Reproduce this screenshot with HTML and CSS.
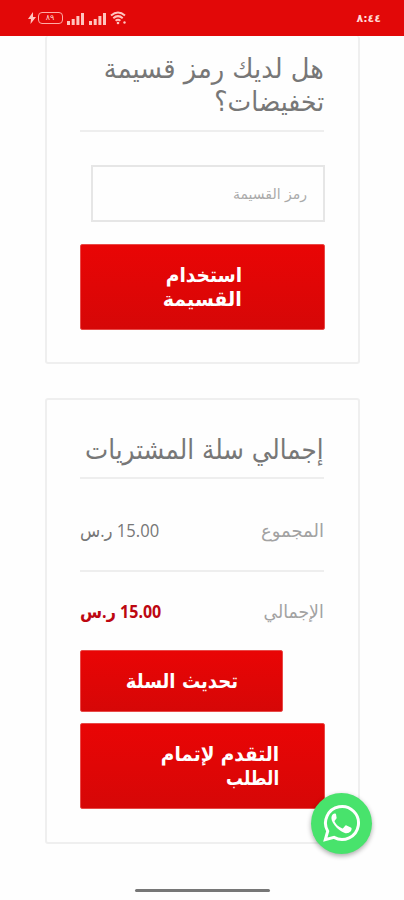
FILE: index.html
```html
<!DOCTYPE html>
<html lang="ar" dir="rtl">
<head>
<meta charset="utf-8">
<title>سلة المشتريات</title>
<link rel="stylesheet" href="styles.css">
</head>
<body>
<header class="status">
  <span class="clock">٨:٤٤</span>
  <div class="indicators">
    <svg class="bolt" width="8" height="12" viewBox="0 0 8 12"><path d="M5 0 0 7h3L2.500 12 8 5H5z"/></svg>
    <span class="battery">٨٩</span>
    <svg class="signal" width="17" height="13" viewBox="0 0 17 13"><path d="M0 9h3v4H0zM4.700 7h3v6h-3zM9.400 4h3v9h-3zM14 1h3v12h-3z"/></svg>
    <svg class="signal" width="17" height="13" viewBox="0 0 17 13"><path d="M0 9h3v4H0zM4.700 7h3v6h-3zM9.400 4h3v9h-3zM14 1h3v12h-3z"/></svg>
    <svg class="wifi" width="17" height="14" viewBox="0 0 17 14"><path d="M1 4.500Q8 -1.500 15 4.500M3.300 7.200Q8 3 12.700 7.200M5.600 9.800Q8 7.800 10.400 9.800"/><circle cx="8" cy="12" r="1.300"/><circle cx="14.500" cy="11.500" r="1.200"/></svg>
  </div>
</header>
<main class="page">
  <section class="card coupon">
    <h2 class="title"><span class="line t1">هل لديك رمز قسيمة</span><span class="line t2">تخفيضات؟</span></h2>
    <div class="field"><span class="line ph">رمز القسيمة</span></div>
    <div class="button apply"><span class="line a1">استخدام</span><span class="line a2">القسيمة</span></div>
  </section>
  <section class="card totals">
    <h2 class="title"><span class="line t3">إجمالي سلة المشتريات</span></h2>
    <div class="row subtotal"><span class="line label l1">المجموع</span><span class="line price p1">15.00 ر.س</span></div>
    <div class="row total"><span class="line label l2">الإجمالي</span><span class="line price p2">15.00 ر.س</span></div>
    <div class="button update"><span class="line u1">تحديث السلة</span></div>
    <div class="button checkout"><span class="line c1">التقدم لإتمام</span><span class="line c2">الطلب</span></div>
  </section>
</main>
<div class="whatsapp">
  <svg width="39" height="39" viewBox="0 0 39 39"><path class="ring" d="M3.300 35.700 5.700 27.200A16.500 16.500 0 1 1 12 33.400Z"/><path class="phone" d="M14.100 10.500c-.4-.9-.8-.9-1.400-.9-1.200 0-3.300 1.400-3.300 4.500 0 3 2.200 6 3.400 7.500 2.600 3.500 6.200 6.300 10.100 7.400 2.600.8 6.600-.7 6.700-4.200 0-.8-.2-1-.8-1.300l-4.300-2c-.6-.3-1.100-.2-1.500.4l-1.700 2.100c-.4.500-.8.500-1.400.2-3.200-1.400-5.500-3.400-7.200-6.500-.3-.5-.2-.9.2-1.300l1.500-1.900c.4-.5.3-.8.1-1.300z"/></svg>
</div>
<div class="home-bar"></div>
</body>
</html>
```
FILE: styles.css
```css
* { box-sizing: border-box; }
body {
  margin: 0;
  height: 900px;
  overflow: hidden;
  position: relative;
  background: #fefefe;
  font-family: "DejaVu Sans", sans-serif;
}
.status {
  height: 36px;
  background: #e20808;
  display: flex;
  justify-content: space-between;
  align-items: center;
  padding: 0 23px 0 28px;
  color: #ffd9d4;
}
.clock { font-size: 11px; font-weight: bold; }
.indicators { direction: ltr; display: flex; align-items: center; gap: 4.500px; fill: #ffc4be; }
.bolt { margin-right: -3px; }
.battery {
  width: 25px;
  height: 12px;
  border: 1.500px solid #ffaaa4;
  border-radius: 4px;
  font-size: 8px;
  line-height: 9px;
  text-align: center;
}
.wifi path { fill: none; stroke: #ffc4be; stroke-width: 2; }
.page { padding: 0 44px 0 45px; }
.card { border: 2px solid #efefef; border-radius: 3px; padding: 0 34px 0 33px; display: flex; flex-direction: column; }
.coupon { height: 328px; border-top: 0; padding-top: 16px; }
.totals { height: 446px; margin-top: 34px; padding-top: 33px; }
.line { display: block; width: max-content; white-space: nowrap; transform-origin: right center; }
.title {
  margin: 0;
  border-bottom: 2px solid #eee;
  font-weight: normal;
  font-size: 27px;
  line-height: 33px;
  color: #777;
}
.coupon .title { height: 80px; }
.totals .title { height: 46px; }
.t1 { transform: scaleX(.953); }
.t2 { transform: scaleX(.93); }
.t3 { transform: scaleX(.912); }
.field {
  margin: 33px -1px 0 11px;
  width: 234px;
  height: 57px;
  border: 2px solid #e6e6e6;
  padding-right: 16px;
  display: flex;
  align-items: center;
  font-size: 14px;
  color: #aaa;
}
.button {
  border: 1px solid #e84a48;
  border-radius: 2px;
  background: linear-gradient(#e90505, #d60707);
  color: #fff;
  font-weight: bold;
  font-size: 20px;
  line-height: 24px;
  margin-right: -1px;
  display: flex;
  flex-direction: column;
  justify-content: center;
  flex-shrink: 0;
}
.apply { height: 86px; margin-top: 22px; padding-right: 82px; }
.a1 { transform: scaleX(.93); }
.a2 { transform: scaleX(.955); }
.row { display: flex; justify-content: space-between; align-items: center; color: #777; }
.price { transform-origin: left center; font-family: "Open Sans", "DejaVu Sans", sans-serif; }
.label { color: #a2a2a2; }
.l2 { transform: scaleX(.96); }
.p1 { transform: scaleX(.92); }
.p2 { transform: scaleX(.89); }
.subtotal { height: 93px; padding-top: 11px; border-bottom: 2px solid #eee; font-size: 18px; }
.total { height: 78px; font-size: 18px; }
.total .price { color: #bd0711; font-weight: bold; }
.update { width: 203px; height: 62px; align-self: flex-end; padding-right: 44px; }
.u1 { transform: scaleX(.905); }
.checkout { height: 86px; margin-top: 11px; padding-right: 45px; }
.c1 { transform: scaleX(.923); }
.c2 { transform: scaleX(.84); }
.whatsapp {
  position: absolute;
  left: 311px;
  top: 793px;
  width: 61px;
  height: 61px;
  border-radius: 50%;
  background: #48e36c;
  box-shadow: 0 2px 5px #0005;
  display: flex;
  align-items: center;
  justify-content: center;
}
.ring { fill: none; stroke: #fff; stroke-width: 3; }
.phone { fill: #fff; }
.home-bar { position: absolute; left: 135px; top: 889px; width: 135px; height: 3px; border-radius: 2px; background: #777; }
```
